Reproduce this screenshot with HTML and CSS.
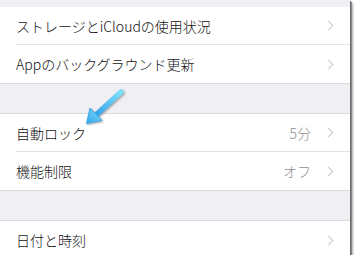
FILE: index.html
```html
<!DOCTYPE html>
<html lang="ja">
<head>
    <meta charset="UTF-8">
    <meta name="viewport" content="width=device-width, initial-scale=1.0">
    <title>一般</title>
    <link rel="stylesheet" href="styles.css">
</head>
<body>
    <div id="screen">
        <div class="spacer top"></div>
        <div class="group">
            <div class="row">
                <span class="label">ストレージとiCloudの使用状況</span>
                <span class="chevron"></span>
            </div>
            <div class="row">
                <span class="label">Appのバックグラウンド更新</span>
                <span class="chevron"></span>
            </div>
        </div>
        <div class="spacer"></div>
        <div class="group">
            <div class="row">
                <span class="label">自動ロック</span>
                <span class="detail">5分</span>
                <span class="chevron"></span>
            </div>
            <div class="row">
                <span class="label">機能制限</span>
                <span class="detail">オフ</span>
                <span class="chevron"></span>
            </div>
        </div>
        <div class="spacer"></div>
        <div class="group">
            <div class="row">
                <span class="label">日付と時刻</span>
                <span class="chevron"></span>
            </div>
        </div>

        <!-- callout arrow pointing at 自動ロック -->
        <svg class="arrow" width="50" height="45" viewBox="0 0 50 45">
            <defs>
                <linearGradient id="arrowFill" x1="1" y1="0" x2="0" y2="1">
                    <stop offset="0" stop-color="#7fe0fb"/>
                    <stop offset="1" stop-color="#34a4ea"/>
                </linearGradient>
            </defs>
            <line x1="41" y1="7" x2="17" y2="29" stroke="url(#arrowFill)" stroke-width="5.5" stroke-linecap="round"/>
            <polygon points="6.5,38.5 10,23 22,35.5" fill="url(#arrowFill)" stroke="#3ea9eb" stroke-width="1" stroke-linejoin="round"/>
        </svg>
    </div>
</body>
</html>
```

FILE: styles.css
```css
body {
    margin: 0;
    background-color: #fff;
    font-family: "Noto Sans CJK JP", "Noto Sans", sans-serif;
}
#screen {
    position: relative;
    width: 350px;
    height: 255px;
    overflow: hidden;
    background-color: #efeff4;
    box-shadow: 1px 1px 0 #6a6a6a, 2px 2px 0 #8a8a8a, 3px 3px 3px rgba(0, 0, 0, 0.35);
}
.spacer {
    height: 29px;
}
.spacer.top {
    height: 7px;
}
.group {
    background-color: #fff;
    border-top: 1px solid #dcdce0;
    border-bottom: 1px solid #dcdce0;
}
.spacer.top + .group {
    border-top: none;
}
.row {
    display: flex;
    align-items: center;
    height: 37px;
    margin-left: 16px;
    padding-right: 18px;
    border-bottom: 1px solid #e2e2e6;
}
.row:last-child {
    border-bottom: none;
    height: 38px;
}
.label {
    flex: 1;
    font-size: 14px;
    font-weight: 300;
    color: #111;
    white-space: nowrap;
}
.detail {
    font-size: 14px;
    font-weight: 300;
    color: #8e8e93;
    margin-right: 14px;
}
.chevron {
    width: 6px;
    height: 6px;
    border-top: 1.2px solid #c7c7cc;
    border-right: 1.2px solid #c7c7cc;
    transform: rotate(45deg);
}
.arrow {
    position: absolute;
    left: 80px;
    top: 85px;
    filter: drop-shadow(1px 1px 1px rgba(0, 0, 0, 0.35));
}
```
